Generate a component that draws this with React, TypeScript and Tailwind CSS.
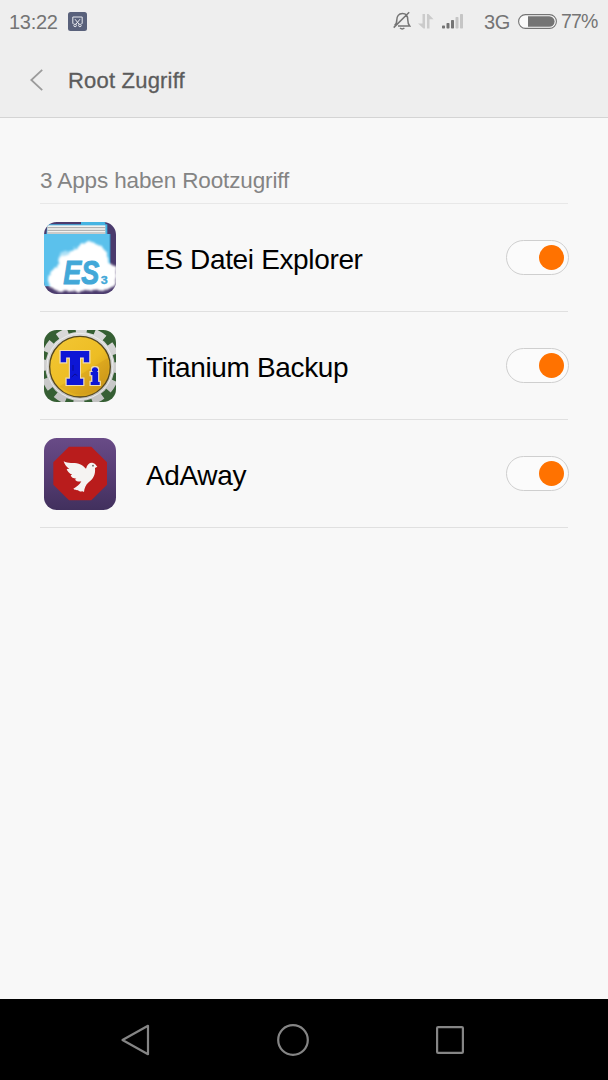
import { useState } from 'react';

const EsIcon = () => (
  <svg viewBox="24 21 216 216" className="h-[72px] w-[72px]">
    <defs>
      <clipPath id="es-clip">
        <rect x="24" y="21" width="216" height="216" rx="38" />
      </clipPath>
      <filter id="es-cloud" x="-10%" y="-10%" width="120%" height="120%">
        <feTurbulence type="fractalNoise" baseFrequency="0.06" numOctaves="2" seed="4" result="n" />
        <feDisplacementMap in="SourceGraphic" in2="n" scale="14" xChannelSelector="R" yChannelSelector="G" />
        <feGaussianBlur stdDeviation="3.5" />
      </filter>
    </defs>
    <g clipPath="url(#es-clip)">
      <rect x="24" y="21" width="216" height="216" fill="#4b3b6d" />
      <path d="M34 28H135V20H208V28H214V70H30Z" fill="#45b4e2" />
      <rect x="34" y="31" width="174" height="26" fill="#f1f1ef" />
      <path d="M34 38H208M34 46H208M34 54H208" stroke="#a5a5a5" strokeWidth="3" />
      <path d="M24 57H222V214H24Z" fill="#5bc1ec" />
      <path d="M222 57V214" stroke="#3b8fc0" strokeWidth="3" />
      <g filter="url(#es-cloud)">
        <path
          d="M36 199C34 176 49 161 68 157C62 137 74 122 94 119C102 121 104 98 125 99C135 76 190 74 205 105C216 119 218 134 217 144C238 150 250 170 243 193C239 215 218 222 205 228C177 222 161 234 141 227C113 235 92 222 77 228C57 228 39 218 36 199Z"
          fill="#fff"
        />
        <path d="M70 136Q85 108 104 112M124 108Q140 82 169 86" fill="none" stroke="#fff" strokeWidth="12" opacity=".5" />
      </g>
      <g fill="#42a8d8" stroke="#42a8d8" fontFamily="Liberation Sans, sans-serif" fontWeight="700">
        <text x="82" y="207" fontSize="100" fontStyle="italic" textLength="108" lengthAdjust="spacingAndGlyphs" strokeWidth="3">ES</text>
        <text x="194" y="207" fontSize="34" textLength="21" lengthAdjust="spacingAndGlyphs" strokeWidth="1">3</text>
      </g>
    </g>
  </svg>
);

const TitaniumIcon = () => (
  <svg viewBox="24 21 216 216" className="h-[72px] w-[72px]">
    <defs>
      <clipPath id="ti-clip">
        <rect x="24" y="21" width="216" height="216" rx="38" />
      </clipPath>
      <linearGradient id="ti-gold" x1="0" y1="0" x2="1" y2="1">
        <stop offset="0" stopColor="#f3c735" />
        <stop offset=".55" stopColor="#edbd24" />
        <stop offset="1" stopColor="#c08c18" />
      </linearGradient>
      <linearGradient id="ti-steel" x1="0" y1="0" x2="0" y2="1">
        <stop offset="0" stopColor="#dadada" />
        <stop offset="1" stopColor="#c2c2c2" />
      </linearGradient>
      <filter id="ti-edge" x="-10%" y="-10%" width="120%" height="120%">
        <feMorphology in="SourceAlpha" operator="dilate" radius="2" result="d" />
        <feFlood floodColor="#f0dfb4" />
        <feComposite in2="d" operator="in" result="edge" />
        <feMerge>
          <feMergeNode in="edge" />
          <feMergeNode in="SourceGraphic" />
        </feMerge>
      </filter>
    </defs>
    <g clipPath="url(#ti-clip)">
      <rect x="24" y="21" width="216" height="216" fill="#365f34" />
      <circle cx="132" cy="130" r="104" fill="url(#ti-steel)" />
      <circle cx="132" cy="130" r="110" fill="none" stroke="url(#ti-steel)" strokeWidth="22" strokeDasharray="34 23.6" strokeDashoffset="14" />
      <circle cx="132" cy="130" r="99" fill="none" stroke="#ececec" strokeWidth="3" />
      <circle cx="132" cy="131" r="91" fill="url(#ti-gold)" stroke="#57491f" strokeWidth="4" />
      <path d="M70 190Q145 150 215 105Q225 150 197 190Q135 240 70 190Z" fill="#c98e16" opacity=".3" />
      <g
        fontFamily="DejaVu Serif, serif"
        fontWeight="700"
        fill="#1118d6"
        stroke="#1118d6"
        filter="url(#ti-edge)"
      >
        <text x="77" y="180" fontSize="122" textLength="79" lengthAdjust="spacingAndGlyphs" strokeWidth="12">T</text>
        <text x="164" y="182" fontSize="63" textLength="26" lengthAdjust="spacingAndGlyphs" strokeWidth="6">i</text>
      </g>
      <path d="M107 162L117 153L124 158M111 126V143" fill="none" stroke="#0b0d92" strokeWidth="3" />
    </g>
  </svg>
);

const AdAwayIcon = () => (
  <svg viewBox="24 21 216 216" className="h-[72px] w-[72px]">
    <defs>
      <linearGradient id="ad-bg" x1="0" y1="0" x2="0" y2="1">
        <stop offset="0" stopColor="#694b87" />
        <stop offset=".5" stopColor="#573d74" />
        <stop offset="1" stopColor="#41305d" />
      </linearGradient>
    </defs>
    <rect x="24" y="21" width="216" height="216" rx="38" fill="url(#ad-bg)" />
    <path d="M99 47H166L213 94V161L166 208H99L52 161V94Z" fill="#b91c1c" />
    <path
      d="M83 91C96 99 113 94 128 98C139 101 145 108 150 113C154 99 162 94 171 96C177 97 179 102 184 107L177 111C179 132 171 144 158 154C149 162 145 172 144 183C138 177 134 184 129 180C125 175 117 179 112 173C121 168 132 160 136 151C129 153 121 151 117 146L121 143C112 143 105 139 104 133L109 131C100 128 94 121 92 114L100 113C91 108 86 101 83 91Z"
      fill="#f5f3f2"
    />
    <circle cx="171" cy="104" r="2.5" fill="#555" />
  </svg>
);

const apps = [
  { name: 'ES Datei Explorer', icon: <EsIcon /> },
  { name: 'Titanium Backup', icon: <TitaniumIcon /> },
  { name: 'AdAway', icon: <AdAwayIcon /> },
];

const Toggle = ({ label }: { label: string }) => {
  const [on, setOn] = useState(true);

  return (
    <button
      role="switch"
      aria-checked={on}
      aria-label={label}
      onClick={() => setOn(!on)}
      className={`flex h-[35px] w-[63px] items-center rounded-full border border-[#cfcfcf] bg-[#fbfbfb] px-1 ${on ? 'justify-end' : 'justify-start'}`}
    >
      <span className={`h-[25px] w-[25px] rounded-full ${on ? 'bg-[#ff7200]' : 'bg-[#c4c4c4]'}`} />
    </button>
  );
};

const StatusBar = () => (
  <div className="flex h-[42px] items-center pl-[9px] pr-[10px] text-[20px] text-[#747474]">
    <span className="w-[49px] pt-px tracking-[-0.3px]">13:22</span>
    <svg viewBox="0 0 19 19" className="ml-[10px] h-[19px] w-[19px]">
      <rect width="19" height="19" rx="2.5" fill="#59617b" />
      <g fill="none" stroke="#e8eaf0" strokeWidth="1">
        <path d="M5.5 11.5H4.8V5H14.2V11.5H13.5M7 7.2L11.3 12.5M12 7.2L7.7 12.5" />
        <circle cx="7.1" cy="13.4" r="1.3" />
        <circle cx="11.9" cy="13.4" r="1.3" />
      </g>
    </svg>
    <div className="ml-auto flex items-center">
      <svg viewBox="0 0 18 19" className="mb-px h-[19px] w-[18px]" fill="none" stroke="#747474" strokeWidth="1.5">
        <path d="M1.5 14.7C3.2 13.4 3.8 12 3.8 9C3.8 5.2 5.7 2.6 9.4 2.6S14.8 5.2 14.8 9C14.8 12 15.2 13.2 16.7 14.9H5M.7 16.6L16.2 1.2M7 17Q9.2 18.8 11.4 17" />
      </svg>
      <svg viewBox="0 0 16 15" className="ml-[7px] h-[15px] w-4" fill="#cbcbcb">
        <path d="M4.5 0H7V14.5H5.5L0 9.5H4.5ZM9 0H10.5L15.5 5.3H11.5V14.5H9Z" />
      </svg>
      <svg viewBox="0 0 22 15" className="ml-[8px] h-[15px] w-[22px]" fill="#747474">
        <rect x="0" y="11.5" width="3" height="3" rx=".7" />
        <rect x="4.5" y="9" width="3" height="5.5" rx=".7" />
        <rect x="9" y="6" width="3" height="8.5" rx=".7" />
        <rect x="13.5" y="3" width="3" height="11.5" rx=".7" fill="#c5c5c5" />
        <rect x="18" y="0" width="3" height="14.5" rx=".7" fill="#c5c5c5" />
      </svg>
      <span className="ml-[20px] w-[27px] pt-px tracking-[-0.3px]">3G</span>
      <svg viewBox="0 0 39 15" className="ml-[7px] h-[15px] w-[39px]">
        <rect x=".6" y=".6" width="37.8" height="13.8" rx="6.9" fill="#fafafa" stroke="#747474" strokeWidth="1.1" />
        <path d="M10 2.2H31.3A5.3 5.3 0 0 1 31.3 12.8H10Z" fill="#747474" />
      </svg>
      <span className="ml-[4px] w-[37px] pt-0.5 text-[19.5px] tracking-[-0.9px]">77%</span>
    </div>
  </div>
);

export default function App() {
  return (
    <div className="flex h-[1080px] w-[608px] flex-col bg-[#f8f8f8] font-['Liberation_Sans',Arial,sans-serif]">
      <header className="h-[118px] border-b border-[#d4d4d4] bg-[#eee]">
        <StatusBar />
        <div className="flex h-[76px] items-center pl-[30px]">
          <svg viewBox="0 0 14 22" className="h-[22px] w-[14px]" fill="none" stroke="#9b9b9b" strokeWidth="1.8">
            <path d="M12.2 .8L1.3 11L12.2 21.2" />
          </svg>
          <h1 className="ml-[24px] text-[22px] tracking-[0.2px] text-[#5c5c5c] [-webkit-text-stroke:0.3px_#5c5c5c]">Root Zugriff</h1>
        </div>
      </header>

      <main className="flex-1 px-10">
        <h2 className="flex h-[86px] items-end border-b border-[#e8e8e8] pb-[9px] text-[22.5px] leading-[27px] tracking-[-0.13px] text-[#848484]">
          3 Apps haben Rootzugriff
        </h2>
        <ul>
          {apps.map((app) => (
            <li key={app.name} className="flex h-[108px] items-center border-b border-[#e0e0e0] pl-1">
              {app.icon}
              <span className="ml-[30px] whitespace-nowrap pt-1 text-[28px] tracking-[-0.35px] text-black">{app.name}</span>
              <span className="-mr-px ml-auto">
                <Toggle label={app.name} />
              </span>
            </li>
          ))}
        </ul>
      </main>

      <nav className="flex h-[81px] items-center bg-black pl-[120px]">
        <svg viewBox="0 0 30 32" className="h-8 w-[30px]" fill="none" stroke="#858585" strokeWidth="2.2" strokeLinejoin="round">
          <path d="M28 1.8V30.2L2.5 16Z" />
        </svg>
        <svg viewBox="0 0 32 32" className="ml-[127px] h-8 w-8" fill="none" stroke="#858585" strokeWidth="2.2">
          <circle cx="16" cy="16" r="14.8" />
        </svg>
        <svg viewBox="0 0 28 28" className="ml-[127px] h-7 w-7" fill="none" stroke="#858585" strokeWidth="2.2">
          <rect x="1.1" y="1.1" width="25.8" height="25.8" rx="1" />
        </svg>
      </nav>
    </div>
  );
}
